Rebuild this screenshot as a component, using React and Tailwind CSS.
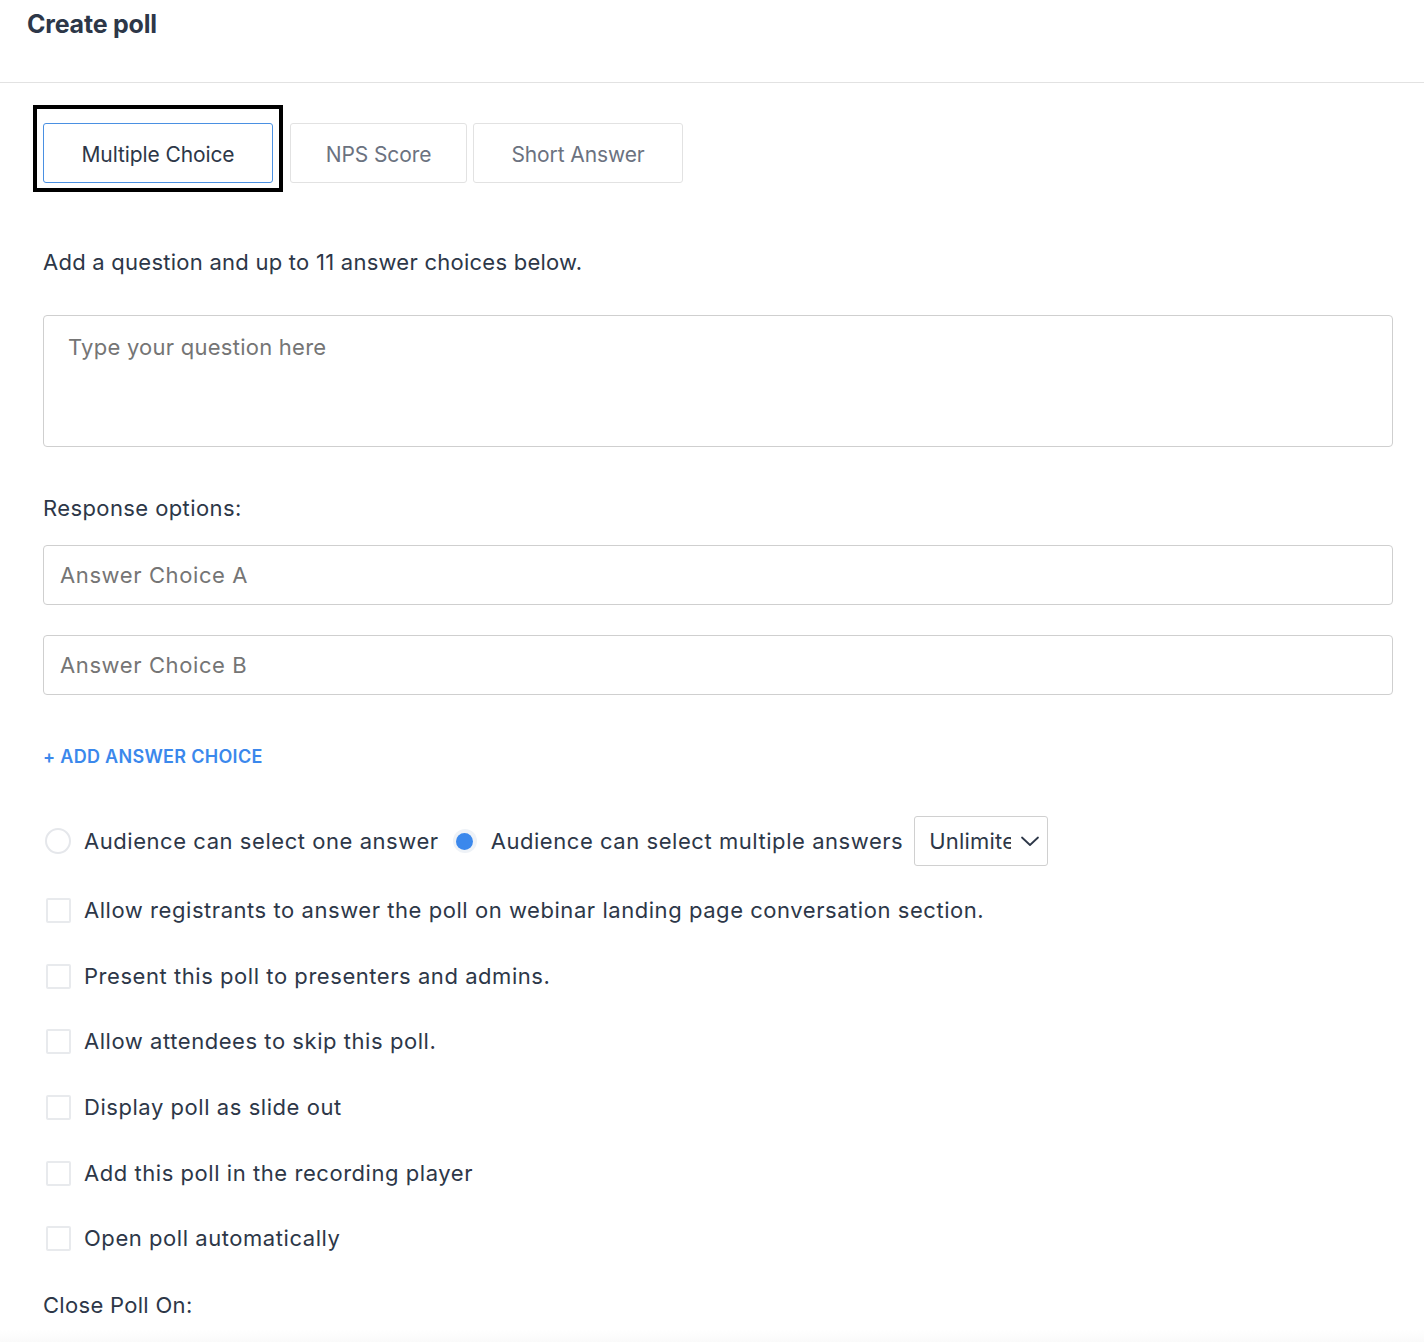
import React, { useState } from 'react';

const font = { fontFamily: 'Inter, "Noto Sans", sans-serif' };

const options = [
  'Allow registrants to answer the poll on webinar landing page conversation section.',
  'Present this poll to presenters and admins.',
  'Allow attendees to skip this poll.',
  'Display poll as slide out',
  'Add this poll in the recording player',
  'Open poll automatically',
];

const Tab = ({ label, active }) => (
  <button
    className={`h-[60px] w-full rounded-[3px] border bg-white pt-[3px] text-[21px] tracking-[-0.1px] ${
      active ? 'border-[#4a90e2] text-[#2d3748]' : 'border-[#e2e2e2] text-[#6b7280]'
    }`}
  >
    {label}
  </button>
);

export default function App() {
  const [multi, setMulti] = useState(true);

  return (
    <div className="min-h-[1342px] w-[1424px] bg-white text-[#2d3748]" style={font}>
      <div className="h-[83px] border-b border-[#e2e2e2] px-[27px] pt-[8px]">
        <h1 className="text-[25px] font-bold leading-[32px] tracking-[-0.2px] text-[#2d3748]">Create poll</h1>
      </div>

      <div className="px-[43px] text-[22px] tracking-[0.55px]">
        {/* tabs */}
        <div className="mt-[22px] -ml-[10px] flex items-start">
          <div className="border-4 border-black px-[6px] pt-[14px] pb-[5px]">
            <div className="w-[230px]"><Tab label="Multiple Choice" active /></div>
          </div>
          <div className="ml-[7px] mt-[18px] flex gap-[6px]">
            <div className="w-[177px]"><Tab label="NPS Score" /></div>
            <div className="w-[210px]"><Tab label="Short Answer" /></div>
          </div>
        </div>

        <p className="mt-[55px] leading-[30px] tracking-[0.25px]">Add a question and up to 11 answer choices below.</p>

        <div className="mt-[38px] h-[132px] w-[1350px] rounded-[4px] border border-[#cfcfcf] px-[24px] pt-[16px] leading-[30px] tracking-[0.25px] text-[#757575]">
          Type your question here
        </div>

        <p className="mt-[46px] leading-[30px] tracking-[0.4px]">Response options:</p>

        <div className="mt-[22px] flex flex-col gap-[30px]">
          {['Answer Choice A', 'Answer Choice B'].map((t) => (
            <div
              key={t}
              className="flex h-[60px] w-[1350px] items-center rounded-[4px] border border-[#cfcfcf] px-[16px] tracking-[0.6px] text-[#757575]"
            >
              {t}
            </div>
          ))}
        </div>

        <div className="mt-[50px] text-[18px] font-semibold leading-[24px] tracking-[0.3px] text-[#3b88ec]">+ ADD ANSWER CHOICE</div>

        {/* radio row */}
        <div className="mt-[47px] flex h-[50px] items-center">
          <div className="ml-[2px] h-[26px] w-[26px] rounded-full border-2 border-[#e5e7eb]" onClick={() => setMulti(false)} />
          <span className="ml-[13px]">Audience can select one answer</span>
          <div
            className="ml-[14px] flex h-[24px] w-[24px] items-center justify-center rounded-full bg-[#eef2f7]"
            onClick={() => setMulti(true)}
          >
            {multi && <div className="h-[17px] w-[17px] rounded-full bg-[#3b88ec]" />}
          </div>
          <span className="ml-[14px]">Audience can select multiple answers</span>
          <div className="ml-[11px] flex h-[50px] w-[134px] shrink-0 items-center justify-between rounded-[3px] border border-[#d0d0d0] pl-[14px] pr-[5px]">
            <span className="w-[82px] overflow-hidden whitespace-nowrap tracking-[0.2px]">Unlimited</span>
            <svg width="24" height="24" viewBox="0 0 24 24" fill="none" stroke="#2d3748" strokeWidth="1.8" strokeLinecap="round" strokeLinejoin="round">
              <path d="M4 8.5l8 7.5 8-7.5" />
            </svg>
          </div>
        </div>

        <div className="mt-[12px] flex flex-col">
          {options.map((o) => (
            <div key={o} className="flex h-[65.6px] items-center">
              <div className="ml-[3px] h-[25px] w-[25px] rounded-[2px] border-2 border-[#e8eaed]" />
              <span className="ml-[13px]">{o}</span>
            </div>
          ))}
        </div>

        <p className="mt-[18px] leading-[30px] tracking-[0.3px]">Close Poll On:</p>
      </div>
      <div className="mt-[10px] h-[20px] bg-gradient-to-b from-white to-[#f7f7f7]" />
    </div>
  );
}
